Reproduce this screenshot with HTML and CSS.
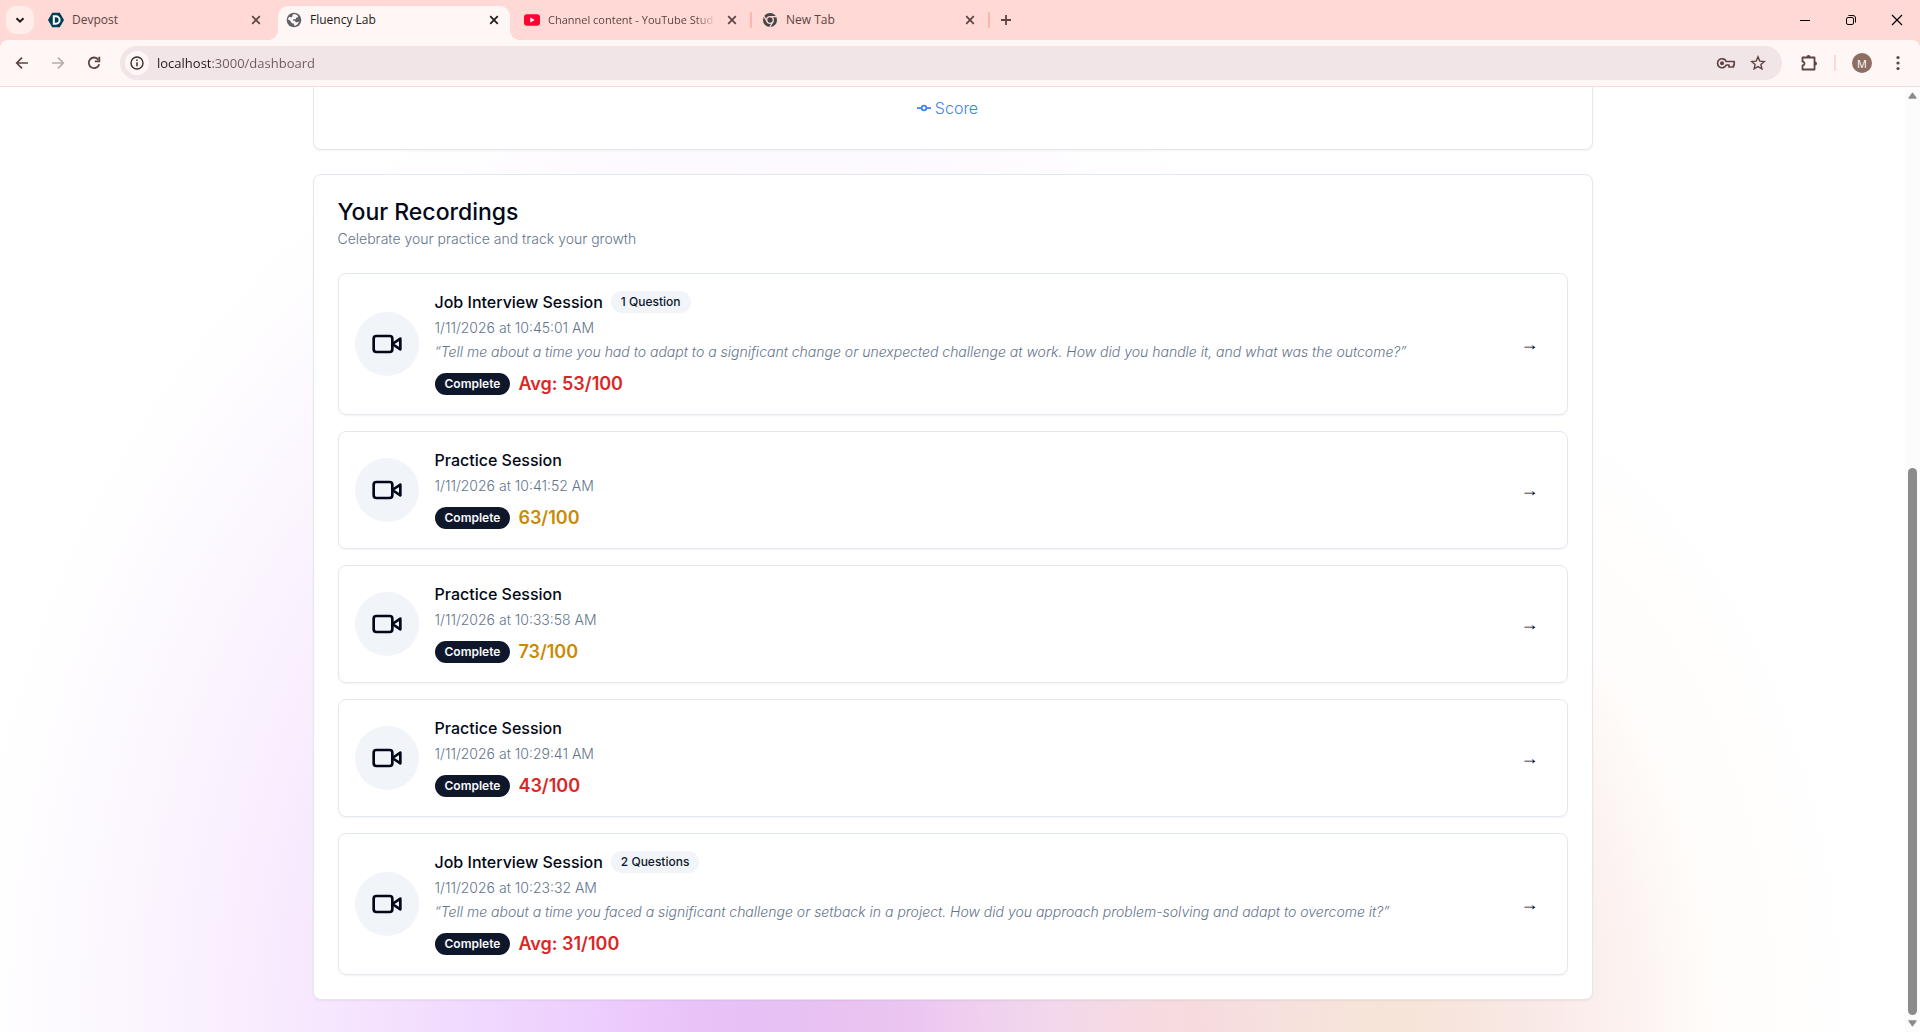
FILE: index.html
```html
<!DOCTYPE html>
<html lang="en">
<head>
  <meta charset="UTF-8">
  <meta name="viewport" content="width=device-width, initial-scale=1.0">
  <title>Fluency Lab</title>
  <link rel="stylesheet" href="styles.css">
</head>
<body>
  <svg class="sprite" aria-hidden="true">
    <symbol id="close" viewBox="0 0 16 16">
      <path d="M4.2 4.2l7.6 7.6M11.8 4.2l-7.6 7.6" fill="none" stroke="currentColor" stroke-width="1.7"/>
    </symbol>
    <symbol id="video" viewBox="0 0 24 24">
      <path d="M22 8l-6 4 6 4z" fill="none" stroke="currentColor" stroke-width="2" stroke-linecap="round" stroke-linejoin="round"/>
      <rect x="2" y="6" width="14" height="12" rx="2" fill="none" stroke="currentColor" stroke-width="2"/>
    </symbol>
  </svg>

  <header class="browser">
    <div class="tab-strip">
      <button class="tab-search" aria-label="Search tabs">
        <svg width="12" height="12" viewBox="0 0 12 12"><path d="M2.5 4.2L6 7.7l3.5-3.5" fill="none" stroke="currentColor" stroke-width="2"/></svg>
      </button>
      <div class="tabs">
        <div class="tab">
          <svg class="favicon" viewBox="0 0 16 16">
            <path d="M4.2 .8h7.6L16 8l-4.2 7.2H4.2L0 8z" fill="#003e54"/>
            <path d="M5.8 4.3h2.1a3.7 3.7 0 010 7.4H5.8z" fill="none" stroke="#fff" stroke-width="2"/>
          </svg>
          <span class="tab-title">Devpost</span>
          <button class="tab-close" aria-label="Close tab"><svg width="16" height="16"><use href="#close"/></svg></button>
        </div>
        <div class="tab active">
          <svg class="favicon" viewBox="0 0 16 16">
            <circle cx="8" cy="8" r="7.3" fill="#5f6368"/>
            <path d="M7.8 2c2 .1 3.4 1 4.3 2.2-.2 1.4-1 1.2-1.8 1.4-.5.8 0 1.4-.9 1.7-1 .2-2-.1-2.6.6-.2.8 1.3.6 2 .8.9.5.3 1.5 1.4 1.7.9.1 1.5-.7 2.6-.5-.8 2.2-2.6 3.6-4.6 3.9-.3-.8.2-1.7-.6-2.2-1-.4-1.9-.2-2.3-1.2C4.8 9 3.4 8 2 7.5c.2-1 .6-2 1.200-2.800 1 .6 1.900.9 2.700.4C6.700 4.300 6 3 7.800 2z" fill="#fff7f5"/>
          </svg>
          <span class="tab-title">Fluency Lab</span>
          <button class="tab-close" aria-label="Close tab"><svg width="16" height="16"><use href="#close"/></svg></button>
        </div>
        <div class="tab">
          <svg class="favicon" viewBox="0 0 16 16">
            <rect x="0" y="2.2" width="16" height="11.6" rx="3" fill="#ff0033"/>
            <path d="M6.3 5.5v5L10.7 8z" fill="#fff"/>
          </svg>
          <span class="tab-title fade">Channel content - YouTube Stud</span>
          <button class="tab-close" aria-label="Close tab"><svg width="16" height="16"><use href="#close"/></svg></button>
        </div>
        <span class="tab-line"></span>
        <div class="tab">
          <svg class="favicon" viewBox="0 0 16 16">
            <circle cx="8" cy="8" r="7" fill="#454746"/>
            <circle cx="8" cy="8" r="3.3" fill="none" stroke="#ffd9d6" stroke-width="1.3"/>
            <path d="M8 4.7h6.2M5.1 9.7L2 4.3M10.9 9.7L7.8 15" fill="none" stroke="#ffd9d6" stroke-width="1.3"/>
          </svg>
          <span class="tab-title">New Tab</span>
          <button class="tab-close" aria-label="Close tab"><svg width="16" height="16"><use href="#close"/></svg></button>
        </div>
        <span class="tab-line"></span>
        <button class="new-tab" aria-label="New tab">
          <svg width="12" height="12" viewBox="0 0 12 12"><path d="M6 1v10M1 6h10" stroke="currentColor" stroke-width="1.8"/></svg>
        </button>
      </div>
      <div class="window-buttons">
        <button aria-label="Minimize"><svg width="12" height="12"><path d="M1 6.5h10" stroke="currentColor"/></svg></button>
        <button aria-label="Restore">
          <svg width="12" height="12"><rect x="1.5" y="3.5" width="7" height="7" rx="1.5" fill="none" stroke="currentColor"/><path d="M3.5 1.5h4.5a2.5 2.5 0 012.5 2.5v4.5" fill="none" stroke="currentColor"/></svg>
        </button>
        <button aria-label="Close"><svg width="12" height="12"><path d="M1 1l10 10M11 1L1 11" stroke="currentColor" stroke-width="1.2"/></svg></button>
      </div>
    </div>

    <div class="toolbar">
      <button class="tool" aria-label="Back">
        <svg width="16" height="16" viewBox="0 0 16 16"><path d="M14 8H3M8 2.7L2.7 8 8 13.3" fill="none" stroke="currentColor" stroke-width="1.7"/></svg>
      </button>
      <button class="tool" aria-label="Forward" disabled>
        <svg width="16" height="16" viewBox="0 0 16 16"><path d="M2 8h11M8 2.7L13.3 8 8 13.3" fill="none" stroke="currentColor" stroke-width="1.7"/></svg>
      </button>
      <button class="tool" aria-label="Reload">
        <svg width="16" height="16" viewBox="0 0 16 16"><path d="M12.3 4.6A5.3 5.3 0 1013.2 9.2" fill="none" stroke="currentColor" stroke-width="1.8"/><path d="M13.3 1.8v4.5H8.8" fill="none" stroke="currentColor" stroke-width="1.8"/></svg>
      </button>
      <div class="omnibox">
        <button class="site-info" aria-label="View site information">
          <svg width="14" height="14" viewBox="0 0 14 14"><circle cx="7" cy="7" r="6" fill="none" stroke="currentColor" stroke-width="1.4"/><path d="M7 6.2v4M7 3.6v1.5" stroke="currentColor" stroke-width="1.5"/></svg>
        </button>
        <input type="text" value="localhost:3000/dashboard" aria-label="Address">
        <button class="omni-icon" aria-label="Passwords">
          <svg width="20" height="16" viewBox="0 0 20 16"><path d="M10.2 6.5A4.5 4.5 0 1010.2 10H13v2h4.500v-2h.7V6.500z" fill="none" stroke="currentColor" stroke-width="1.700" stroke-linejoin="round"/><circle cx="6" cy="8.200" r="2" fill="currentColor"/></svg>
        </button>
        <button class="omni-icon" aria-label="Bookmark this page">
          <svg width="16" height="16" viewBox="0 0 16 16"><path d="M8 1.9l1.8 4.2 4.5.4-3.4 3 1 4.400L8 11.600l-3.900 2.300 1-4.400-3.400-3 4.500-.4z" fill="none" stroke="currentColor" stroke-width="1.400"/></svg>
        </button>
      </div>
      <button class="tool extensions" aria-label="Extensions">
        <svg width="18" height="18" viewBox="0 0 18 18"><path d="M2.500 3.500h12v12h-12v-4a2 2 0 000-4z" fill="none" stroke="currentColor" stroke-width="1.800" stroke-linejoin="round"/><path d="M6.500 3a2 2 0 014 0zM15 7.500a2 2 0 010 4z" fill="currentColor"/></svg>
      </button>
      <span class="tool-line"></span>
      <button class="avatar" aria-label="Profile">M</button>
      <button class="tool" aria-label="Menu">
        <svg width="4" height="16" viewBox="0 0 4 16" fill="currentColor"><circle cx="2" cy="2.500" r="1.600"/><circle cx="2" cy="8" r="1.600"/><circle cx="2" cy="13.500" r="1.600"/></svg>
      </button>
    </div>
  </header>

  <div class="viewport">
    <main class="page">
      <section class="card chart-card">
        <div class="legend">
          <svg width="14" height="14" viewBox="0 0 32 32"><path d="M0 16h10.667a5.333 5.333 0 0110.666 0H32M21.333 16a5.333 5.333 0 01-10.666 0" fill="none" stroke="#3b82f6" stroke-width="4"/></svg>
          <span>Score</span>
        </div>
      </section>

      <section class="card">
        <div class="card-header">
          <h3>Your Recordings</h3>
          <p>Celebrate your practice and track your growth</p>
        </div>

        <div class="recordings">
          <article class="recording">
            <div class="thumb"><svg width="32" height="32"><use href="#video"/></svg></div>
            <div class="details">
              <div class="title-row">
                <h4>Job Interview Session</h4>
                <span class="badge light">1 Question</span>
              </div>
              <p class="date">1/11/2026 at 10:45:01 AM</p>
              <p class="question">“Tell me about a time you had to adapt to a significant change or unexpected challenge at work. How did you handle it, and what was the outcome?”</p>
              <div class="status">
                <span class="badge">Complete</span>
                <span class="score low">Avg: 53/100</span>
              </div>
            </div>
            <button class="open" aria-label="Open recording">→</button>
          </article>

          <article class="recording">
            <div class="thumb"><svg width="32" height="32"><use href="#video"/></svg></div>
            <div class="details">
              <div class="title-row">
                <h4>Practice Session</h4>
              </div>
              <p class="date">1/11/2026 at 10:41:52 AM</p>
              <div class="status">
                <span class="badge">Complete</span>
                <span class="score medium">63/100</span>
              </div>
            </div>
            <button class="open" aria-label="Open recording">→</button>
          </article>

          <article class="recording">
            <div class="thumb"><svg width="32" height="32"><use href="#video"/></svg></div>
            <div class="details">
              <div class="title-row">
                <h4>Practice Session</h4>
              </div>
              <p class="date">1/11/2026 at 10:33:58 AM</p>
              <div class="status">
                <span class="badge">Complete</span>
                <span class="score medium">73/100</span>
              </div>
            </div>
            <button class="open" aria-label="Open recording">→</button>
          </article>

          <article class="recording">
            <div class="thumb"><svg width="32" height="32"><use href="#video"/></svg></div>
            <div class="details">
              <div class="title-row">
                <h4>Practice Session</h4>
              </div>
              <p class="date">1/11/2026 at 10:29:41 AM</p>
              <div class="status">
                <span class="badge">Complete</span>
                <span class="score low">43/100</span>
              </div>
            </div>
            <button class="open" aria-label="Open recording">→</button>
          </article>

          <article class="recording">
            <div class="thumb"><svg width="32" height="32"><use href="#video"/></svg></div>
            <div class="details">
              <div class="title-row">
                <h4>Job Interview Session</h4>
                <span class="badge light">2 Questions</span>
              </div>
              <p class="date">1/11/2026 at 10:23:32 AM</p>
              <p class="question">“Tell me about a time you faced a significant challenge or setback in a project. How did you approach problem-solving and adapt to overcome it?”</p>
              <div class="status">
                <span class="badge">Complete</span>
                <span class="score low">Avg: 31/100</span>
              </div>
            </div>
            <button class="open" aria-label="Open recording">→</button>
          </article>
        </div>
      </section>
    </main>

    <div class="scrollbar" aria-hidden="true">
      <svg width="9" height="7" viewBox="0 0 9 7"><path d="M4.5 .8L8.3 6.2H.7z" fill="#8b8b8b" stroke="#8b8b8b" stroke-linejoin="round"/></svg>
      <div class="scroll-track"><div class="scroll-thumb"></div></div>
      <svg width="9" height="7" viewBox="0 0 9 7"><path d="M4.5 6.2L8.3 .8H.7z" fill="#8b8b8b" stroke="#8b8b8b" stroke-linejoin="round"/></svg>
    </div>
  </div>
</body>
</html>
```

FILE: styles.css
```css
* {
  box-sizing: border-box;
}

body {
  margin: 0;
  height: 100vh;
  display: flex;
  flex-direction: column;
  overflow: hidden;
  font-family: Inter, sans-serif;
  color: #020817;
  background-color: #fff;
}

h3,
h4,
p {
  margin: 0;
}

button {
  display: flex;
  align-items: center;
  justify-content: center;
  padding: 0;
  border: none;
  background: none;
  color: inherit;
  font-family: inherit;
}

.sprite {
  display: none;
}

/* browser window */
.browser {
  background-color: #ffd9d6;
  color: #5d4442;
  font-family: "Open Sans", "Noto Sans", sans-serif;
}

.tab-strip {
  display: flex;
  height: 40px;
  padding-left: 6px;
}

.tab-search {
  width: 28px;
  height: 28px;
  margin: 6px 6px 0 0;
  border-radius: 10px;
  background-color: #ffedea;
  color: #201a19;
}

.tabs {
  flex: 1;
  display: flex;
  align-items: center;
}

.tab {
  display: flex;
  align-items: center;
  width: 232px;
  height: 34px;
  margin: 6px 6px 0 0;
  padding: 0 8px 6px 8px;
}

.tab.active {
  position: relative;
  background-color: #fff7f5;
  border-radius: 10px 10px 0 0;
  color: #201a19;
}

.tab.active::before,
.tab.active::after {
  content: "";
  position: absolute;
  bottom: 0;
  width: 10px;
  height: 10px;
}

.tab.active::before {
  left: -10px;
  background: radial-gradient(circle at 0 0, transparent 10px, #fff7f5 10px);
}

.tab.active::after {
  right: -10px;
  background: radial-gradient(circle at 100% 0, transparent 10px, #fff7f5 10px);
}

.favicon {
  width: 16px;
  height: 16px;
  margin-right: 8px;
}

.tab-title {
  flex: 1;
  white-space: nowrap;
  font-size: 12px;
  line-height: 18px;
}

.tab-title.fade {
  max-width: 168px;
  margin-right: 8px;
  overflow: hidden;
  font-size: 11px;
  -webkit-mask-image: linear-gradient(to left, transparent, #000 20px);
  mask-image: linear-gradient(to left, transparent, #000 20px);
}

.tab-close {
  width: 16px;
  height: 16px;
}

.tab-line {
  width: 2px;
  height: 16px;
  margin: 0 2px 0 -4px;
  border-radius: 1px;
  background-color: #ffb4ab;
}

.new-tab {
  width: 28px;
  height: 28px;
}

.window-buttons {
  display: flex;
  color: #000;
}

.window-buttons button {
  width: 46px;
}

.toolbar {
  display: flex;
  align-items: center;
  height: 47px;
  padding: 0 4px;
  border-bottom: 1px solid #fadcd6;
  border-radius: 8px 8px 0 0;
  background-color: #fff7f5;
}

.tool {
  width: 36px;
  height: 34px;
}

.tool:disabled {
  color: #b9abaa;
}

.omnibox {
  flex: 1;
  display: flex;
  align-items: center;
  height: 34px;
  margin-left: 8px;
  padding: 0 8px 0 5px;
  border-radius: 17px;
  background-color: #f1e5e7;
}

.site-info {
  width: 24px;
  height: 24px;
  border-radius: 50%;
  background-color: #fff7f5;
  color: #3b2d2c;
}

.omnibox input {
  flex: 1;
  margin-left: 8px;
  padding: 0;
  border: none;
  outline: none;
  /* host is darker than the rest of the address */
  background: linear-gradient(to right, #201a1b 55px, #6b5a59 55px);
  -webkit-background-clip: text;
  background-clip: text;
  color: transparent;
  font-family: inherit;
  font-size: 13px;
  line-height: 20px;
}

.omni-icon {
  width: 32px;
  height: 28px;
}

.extensions {
  margin-left: 9px;
}

.tool-line {
  width: 2px;
  height: 16px;
  margin: 0 16px 0 7px;
  background-color: #ffd9d6;
}

.avatar {
  width: 20px;
  height: 20px;
  margin-right: 8px;
  border-radius: 50%;
  background-color: #8d6e63;
  color: #fff;
  font-size: 11px;
}

/* page */
.viewport {
  flex: 1;
  display: flex;
  min-height: 0;
}

.page {
  flex: 1;
  display: flex;
  flex-direction: column;
  align-items: center;
  gap: 24px;
  overflow: hidden;
  background:
    radial-gradient(ellipse 480px 700px at 73% 100%, rgba(247, 229, 214, 0.95), rgba(250, 234, 224, 0.6) 35%, rgba(255, 247, 242, 0.3) 70%, rgba(255, 255, 255, 0)),
    radial-gradient(ellipse 500px 600px at 63% 100%, rgba(241, 196, 212, 0.9), rgba(236, 196, 226, 0.6) 40%, rgba(240, 210, 240, 0)),
    radial-gradient(ellipse 820px 1000px at 41% 100%, #e6c0f8, #e8c2f8 10%, #edcdfd 22%, #f0d9fe 37%, #f6e6fe 55%, #faf0fe 70%, #fdfaff 88%, #fff);
}

.card {
  width: 100%;
  max-width: 1280px;
  padding: 24px;
  border: 1px solid #e2e8f0;
  border-radius: 8px;
  background-color: #fff;
  box-shadow: 0 1px 2px rgba(0, 0, 0, 0.05);
}

.chart-card {
  padding: 9px 24px 29px;
  border-top: none;
  border-radius: 0 0 8px 8px;
}

.legend {
  display: flex;
  align-items: center;
  justify-content: center;
  gap: 4px;
  padding-right: 10px;
  color: #3b82f6;
  font-size: 16px;
  font-weight: 300;
  line-height: 24px;
}

.card-header {
  display: flex;
  flex-direction: column;
  gap: 4px;
  padding-bottom: 24px;
}

.card-header h3 {
  font-size: 23px;
  font-weight: 500;
  line-height: 26px;
}

.card-header p,
.date,
.question {
  color: #64748b;
  font-size: 14px;
  font-weight: 300;
  line-height: 20px;
}

.recordings {
  display: flex;
  flex-direction: column;
  gap: 16px;
}

.recording {
  display: flex;
  align-items: center;
  gap: 16px;
  padding: 16px;
  border: 1px solid #e2e8f0;
  border-radius: 8px;
  box-shadow: 0 1px 2px rgba(0, 0, 0, 0.05);
}

.thumb {
  display: flex;
  align-items: center;
  justify-content: center;
  width: 64px;
  height: 64px;
  border-radius: 50%;
  background-color: #f1f5f9;
}

.details {
  flex: 1;
}

.title-row {
  display: flex;
  align-items: center;
  gap: 8px;
}

.title-row h4 {
  font-size: 16px;
  font-weight: 500;
  line-height: 24px;
}

.date,
.question {
  margin-top: 4px;
}

.question {
  font-style: italic;
}

.status {
  display: flex;
  align-items: center;
  gap: 8px;
  margin-top: 8px;
}

.badge {
  padding: 3px 10px;
  border-radius: 11px;
  background-color: #0f172a;
  color: #f8fafc;
  font-size: 12px;
  font-weight: 600;
  line-height: 16px;
}

.badge.light {
  background-color: #f1f5f9;
  color: #0f172a;
  font-weight: 500;
}

.score {
  font-size: 18px;
  font-weight: 600;
  line-height: 28px;
}

.score.low {
  color: #dc2626;
}

.score.medium {
  color: #ca8a04;
}

.open {
  height: 36px;
  padding: 0 12px;
  font-family: "Liberation Sans", sans-serif;
  font-size: 18px;
}

.scrollbar {
  display: flex;
  flex-direction: column;
  align-items: center;
  gap: 5px;
  width: 15px;
  padding: 5px 0;
  background-color: #fcfcfc;
}

.scroll-track {
  flex: 1;
  display: flex;
  flex-direction: column;
  justify-content: flex-end;
}

.scroll-thumb {
  width: 9px;
  height: 60%;
  border-radius: 5px;
  background-color: #8b8b8b;
}
```
